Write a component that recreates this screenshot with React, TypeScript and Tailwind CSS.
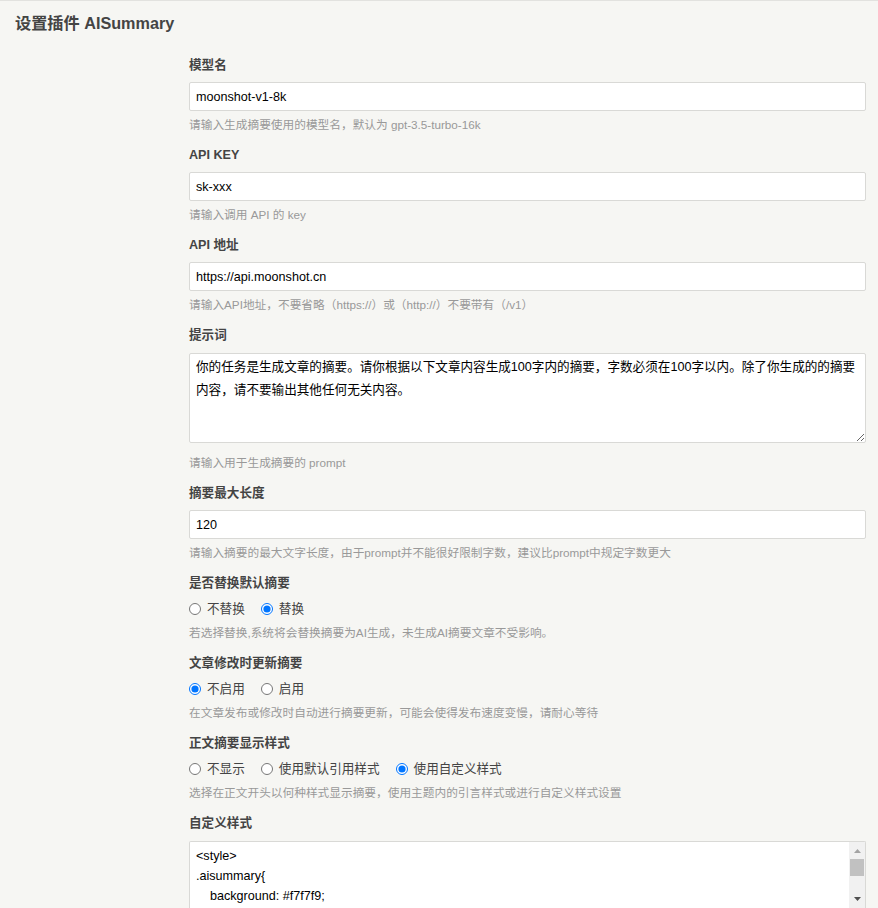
import React from 'react';

type TextItem = { kind: 'text'; label: string; value: string; desc: string };
type AreaItem = { kind: 'area'; label: string; value: string; desc: string };
type RadioItem = {
  kind: 'radio';
  name: string;
  label: string;
  options: string[];
  checked: number;
  desc: string;
};
type Item = TextItem | AreaItem | RadioItem;

const PROMPT =
  '你的任务是生成文章的摘要。请你根据以下文章内容生成100字内的摘要，字数必须在100字以内。除了你生成的的摘要内容，请不要输出其他任何无关内容。';

const items: Item[] = [
  { kind: 'text', label: '模型名', value: 'moonshot-v1-8k', desc: '请输入生成摘要使用的模型名，默认为 gpt-3.5-turbo-16k' },
  { kind: 'text', label: 'API KEY', value: 'sk-xxx', desc: '请输入调用 API 的 key' },
  {
    kind: 'text',
    label: 'API 地址',
    value: 'https://api.moonshot.cn',
    desc: '请输入API地址，不要省略（https://）或（http://）不要带有（/v1）',
  },
  { kind: 'area', label: '提示词', value: PROMPT, desc: '请输入用于生成摘要的 prompt' },
  {
    kind: 'text',
    label: '摘要最大长度',
    value: '120',
    desc: '请输入摘要的最大文字长度，由于prompt并不能很好限制字数，建议比prompt中规定字数更大',
  },
  {
    kind: 'radio',
    name: 'replace',
    label: '是否替换默认摘要',
    options: ['不替换', '替换'],
    checked: 1,
    desc: '若选择替换,系统将会替换摘要为AI生成，未生成AI摘要文章不受影响。',
  },
  {
    kind: 'radio',
    name: 'update',
    label: '文章修改时更新摘要',
    options: ['不启用', '启用'],
    checked: 0,
    desc: '在文章发布或修改时自动进行摘要更新，可能会使得发布速度变慢，请耐心等待',
  },
  {
    kind: 'radio',
    name: 'show',
    label: '正文摘要显示样式',
    options: ['不显示', '使用默认引用样式', '使用自定义样式'],
    checked: 2,
    desc: '选择在正文开头以何种样式显示摘要，使用主题内的引言样式或进行自定义样式设置',
  },
];

// only the lines visible in the scrolled box
const CSS_LINES = ['<style>', '.aisummary{', '    background: #f7f7f9;'];

const Label = ({ children }: { children: React.ReactNode }) => (
  <label className="block text-[12.6px] leading-[17px] font-bold text-[#444]">{children}</label>
);

const Desc = ({ children, className = '' }: { children: React.ReactNode; className?: string }) => (
  <p className={`text-[11.7px] leading-[16px] text-[#999] ${className}`}>{children}</p>
);

const Field = ({ item }: { item: Item }) => {
  if (item.kind === 'text') {
    return (
      <div>
        <Label>{item.label}</Label>
        <input
          type="text"
          defaultValue={item.value}
          className="mt-[8px] block w-full h-[29px] px-[6px] bg-white border border-[#d9d9d6] rounded-[2px] text-[12.6px] text-black outline-none"
        />
        <Desc className="mt-[6px]">{item.desc}</Desc>
      </div>
    );
  }
  if (item.kind === 'area') {
    return (
      <div>
        <Label>{item.label}</Label>
        <textarea
          defaultValue={item.value}
          className="mt-[9px] block w-full h-[90px] pl-[6px] pr-[4px] pt-[2px] bg-white border border-[#d9d9d6] rounded-[2px] text-[12.6px] leading-[23px] text-black outline-none"
        />
        <Desc className="mt-[12px]">{item.desc}</Desc>
      </div>
    );
  }
  return (
    <div>
      <Label>{item.label}</Label>
      <div className="mt-[7px] h-[20px] flex items-center gap-[16px]">
        {item.options.map((opt, i) => (
          <span key={opt} className="flex items-center gap-[6px]">
            <input
              type="radio"
              name={item.name}
              defaultChecked={i === item.checked}
              className="m-0 w-[12px] h-[12px]"
            />
            <span className="text-[12.6px] text-[#444]">{opt}</span>
          </span>
        ))}
      </div>
      <Desc className="mt-[6px]">{item.desc}</Desc>
    </div>
  );
};

const Arrow = ({ up, color }: { up?: boolean; color: string }) => (
  <svg width="7" height="4" viewBox="0 0 7 4">
    <path d={up ? 'M0 4 L3.5 0 L7 4 Z' : 'M0 0 L3.5 4 L7 0 Z'} fill={color} />
  </svg>
);

export default function App() {
  return (
    <div className="h-[908px] overflow-hidden bg-[#f6f6f3] border-t border-[#e2e2df] font-['Liberation_Sans','Noto_Sans_CJK_SC',sans-serif]">
      <h2 className="pl-[15px] pt-[12px] text-[16.2px] leading-[20px] font-bold text-[#444]">
        设置插件 AISummary
      </h2>

      <form className="ml-[189px] w-[677px] mt-[24px] flex flex-col gap-[14px]">
        {items.map((item) => (
          <Field key={item.label} item={item} />
        ))}

        <div>
          <Label>自定义样式</Label>
          <div className="mt-[9px] h-[67px] flex bg-white border border-[#d9d9d6] border-b-0 rounded-t-[2px] overflow-hidden">
            <div className="flex-1 pl-[6px] pt-[4px] text-[12.6px] leading-[20px] text-black whitespace-pre">
              {CSS_LINES.map((line, i) => (
                <div key={i}>{line}</div>
              ))}
            </div>
            <div className="w-[16px] flex flex-col bg-[#f1f1f1]">
              <div className="h-[17px] flex items-center justify-center">
                <Arrow up color="#a3a3a3" />
              </div>
              <div className="h-[17px] mx-px bg-[#c1c1c1]" />
              <div className="flex-1" />
              <div className="h-[15px] pt-[4px] flex items-start justify-center">
                <Arrow color="#505050" />
              </div>
            </div>
          </div>
        </div>
      </form>
    </div>
  );
}
